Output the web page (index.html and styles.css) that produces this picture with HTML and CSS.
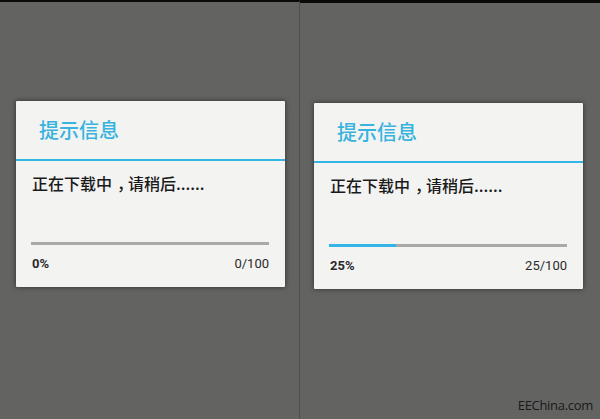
FILE: index.html
```html
<!DOCTYPE html>
<html lang="zh-CN">
<head>
    <meta charset="UTF-8">
    <meta name="viewport" content="width=device-width, initial-scale=1.0">
    <title>下载进度对话框</title>
    <link rel="stylesheet" href="styles.css">
</head>
<body>
    <div class="screens">
        <!-- Left screen: 0% -->
        <section class="screen screen-left">
            <div class="dialog">
                <div class="dialog-title">提示信息</div>
                <div class="dialog-body">
                    <p class="message">正在下载中<span class="comma">，</span>请稍后......</p>
                    <div class="progress">
                        <div class="progress-fill" style="width: 0%"></div>
                    </div>
                    <div class="progress-labels">
                        <span class="percent">0%</span>
                        <span class="count">0/100</span>
                    </div>
                </div>
            </div>
        </section>

        <!-- Right screen: 25% -->
        <section class="screen screen-right">
            <div class="dialog">
                <div class="dialog-title">提示信息</div>
                <div class="dialog-body">
                    <p class="message">正在下载中<span class="comma">，</span>请稍后......</p>
                    <div class="progress">
                        <div class="progress-fill" style="width: 28%"></div>
                    </div>
                    <div class="progress-labels">
                        <span class="percent">25%</span>
                        <span class="count">25/100</span>
                    </div>
                </div>
            </div>
        </section>
    </div>

    <div class="watermark">EEChina.com</div>
</body>
</html>
```

FILE: styles.css
```css
/* Reset */
body, p {
    margin: 0;
    padding: 0;
}

body {
    width: 600px;
    height: 419px;
    overflow: hidden;
    position: relative;
    background-color: #636362;
    font-family: "Roboto", "Noto Sans CJK SC", sans-serif;
}

/* Two phone screens side by side */
.screens {
    display: flex;
    height: 419px;
}

.screen {
    box-sizing: border-box;
    height: 419px;
    background-color: #636362;
}

.screen-left {
    width: 300px;
    border-top: 2px solid #0a0a0a;
    border-right: 1px solid #4f4f4e;
    padding: 99px 0 0 16px;
}

.screen-right {
    width: 300px;
    border-top: 3px solid #0a0a0a;
    padding: 100px 0 0 14px;
}

/* Dialog card */
.dialog {
    width: 269px;
    height: 186px;
    background-color: #f3f3f2;
    box-shadow: 0 0 5px rgba(0, 0, 0, 0.55);
    border-radius: 1px;
    display: flex;
    flex-direction: column;
}

.dialog-title {
    height: 60px;
    box-sizing: border-box;
    border-bottom: 2px solid #33b5e5;
    padding: 16px 0 0 23px;
    font-family: "Noto Sans CJK SC", sans-serif;
    font-size: 20px;
    font-weight: 500;
    line-height: 26px;
    color: #37b3de;
}

.dialog-body {
    padding: 11px 16px 0 16px;
}

.message {
    font-family: "Noto Sans CJK SC", sans-serif;
    font-size: 16px;
    font-weight: 500;
    line-height: 22px;
    color: #1a1a1a;
}

/* Full-width comma sits centred in its cell, as on the device */
.comma {
    padding-left: 5px;
    letter-spacing: -5px;
}

/* Progress bar */
.progress {
    margin-top: 48px;
    margin-left: -1px;
    height: 3px;
    background-color: #a9a9a9;
}

.progress-fill {
    height: 100%;
    background-color: #33b5e5;
}

.progress-labels {
    display: flex;
    justify-content: space-between;
    margin-top: 11px;
    font-size: 13px;
    line-height: 16px;
    color: #2a2a2a;
}

.percent {
    font-weight: bold;
}

/* Watermark over the corner */
.watermark {
    position: absolute;
    right: 7px;
    bottom: 5px;
    font-family: "Open Sans", sans-serif;
    font-size: 13px;
    letter-spacing: -0.3px;
    color: #1a1a1a;
}
```
